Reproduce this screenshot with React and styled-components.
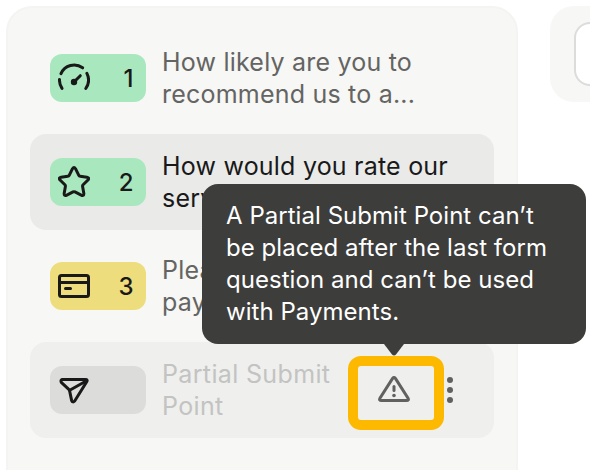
import React from "react";
import styled, { createGlobalStyle } from "styled-components";

const GlobalStyle = createGlobalStyle`
  * { box-sizing: border-box; }
  body {
    margin: 0;
    background: #fff;
    font-family: Inter, "Liberation Sans", sans-serif;
  }
`;

const Page = styled.div`
  position: relative;
  display: flex;
  align-items: flex-start;
  gap: 32px;
  width: 590px;
  height: 470px;
  padding: 6px 0 0 6px;
  overflow: hidden;
`;

const Panel = styled.aside`
  flex: none;
  display: flex;
  flex-direction: column;
  gap: 8px;
  width: 512px;
  height: 500px;
  padding: 22px;
  border: 2px solid #f4f4f3;
  border-radius: 26px;
  background: #f7f7f5;
`;

const Toolbar = styled.div`
  flex: none;
  width: 200px;
  height: 96px;
  padding: 16px 24px;
  border-radius: 24px;
  background: #f7f7f5;
`;

const ToolbarButton = styled.div`
  width: 152px;
  height: 64px;
  border: 2px solid #dcdcda;
  border-radius: 16px;
  background: #fff;
`;

const Row = styled.div`
  display: flex;
  align-items: center;
  gap: 16px;
  height: 96px;
  padding: 0 20px;
  border-radius: 16px;
  background: ${(p) => p.$bg || "transparent"};
`;

const Badge = styled.div`
  flex: none;
  display: flex;
  align-items: center;
  justify-content: space-between;
  width: 96px;
  height: 48px;
  padding: 0 12.5px 0 8px;
  border-radius: 12px;
  background: ${(p) => p.$bg};
  color: #191919;
  font-size: 24px;
  font-weight: 450;

  svg { display: block; flex: none; }
`;

const Label = styled.div`
  color: ${(p) => p.$color || "#646462"};
  font-size: 25px;
  line-height: 32px;
  letter-spacing: ${(p) => p.$spacing || "0.21px"};
  white-space: pre;
`;

const Tooltip = styled.div`
  position: absolute;
  left: 202px;
  top: 184px;
  width: 384px;
  height: 160px;
  padding: 16px 24px;
  border-radius: 16px;
  background: #3d3d3b;
  color: #fff;
  font-size: 24px;
  line-height: 32px;
  letter-spacing: 0.04px;
  white-space: pre;
`;

const Arrow = styled.svg`
  position: absolute;
  left: 182px;
  top: 159px;
`;

const Highlight = styled.div`
  position: absolute;
  left: 348px;
  top: 356px;
  display: flex;
  align-items: center;
  justify-content: center;
  width: 96px;
  height: 74px;
  padding: 0 4px 6px 0;
  border: 10px solid #fdb900;
  border-radius: 13px;
`;

const MenuDots = styled.svg`
  flex: none;
  margin: 0 20px 0 auto;
`;

const Glyph = ({ children }) => (
  <svg width="32" height="32" viewBox="0 0 32 32" fill="none" stroke="#191919"
    strokeWidth="3" strokeLinecap="round" strokeLinejoin="round">
    {children}
  </svg>
);

const GaugeIcon = () => (
  <Glyph>
    <path d="M3 11.6A14.3 14.3 0 0 1 24.6 5.8M28.9 11.4A15 15 0 0 1 27.8 26.5M1.5 17.4A15 15 0 0 0 4 26.4" />
    <path d="M16 20L22.3 13.7" />
    <circle cx="16" cy="20" r="3.2" fill="#191919" stroke="none" />
  </Glyph>
);

const StarIcon = () => (
  <Glyph>
    <path d="M14.5 2.7Q16 .3 17.5 2.7L20.8 9.4Q21.2 10.2 22.2 10.3L28.9 11.2Q32 11.8 29.7 14.2L25.1 18.8Q24.4 19.5 24.6 20.4L25.8 27.2Q26.1 30.4 23.2 29.1L17 25.9Q16 25.4 15 25.9L8.8 29.1Q5.9 30.4 6.2 27.2L7.4 20.4Q7.6 19.5 6.9 18.8L2.3 14.2Q0 11.8 3.1 11.2L9.8 10.3Q10.8 10.2 11.2 9.4Z" />
  </Glyph>
);

const CardIcon = () => (
  <Glyph>
    <rect x="1.5" y="5.5" width="29" height="21" rx="2" />
    <path d="M1.5 12.5H30.5" />
    <path d="M7.5 18.5H12.5" />
  </Glyph>
);

const SendIcon = () => (
  <Glyph>
    <path d="M4.2 5.5H27.5Q30.1 5.5 28.7 7.8L16.7 27Q14.6 29.1 13.6 26.4L11.6 16.7Q11.4 15.8 10.8 15.3L3.3 8.4Q2.3 6 4.2 5.5Z" />
    <path d="M11.7 16.2L28.6 6.7" />
  </Glyph>
);

const WarningIcon = () => (
  <svg width="32" height="28" viewBox="0 0 32 28" fill="none" stroke="#616160"
    strokeWidth="3" strokeLinecap="round" strokeLinejoin="round">
    <path d="M14.6 2.4Q16 .6 17.4 2.4L30.1 22.3Q31.2 24.5 28.6 24.5H3.4Q.8 24.5 1.9 22.3Z" />
    <path d="M16 10.5V14.5" />
    <circle cx="16" cy="19.5" r="1.8" fill="#616160" stroke="none" />
  </svg>
);

export default function App() {
  return (
    <>
      <GlobalStyle />
      <Page>
        <Panel>
          <Row>
            <Badge $bg="#a9e8be"><GaugeIcon />1</Badge>
            <Label>{"How likely are you to\nrecommend us to a..."}</Label>
          </Row>
          <Row $bg="#eaeae9">
            <Badge $bg="#a9e8be"><StarIcon />2</Badge>
            <Label $color="#191919">{"How would you rate our\nserv"}</Label>
          </Row>
          <Row>
            <Badge $bg="#eddd7d"><CardIcon />3</Badge>
            <Label>{"Plea\npay"}</Label>
          </Row>
          <Row $bg="#efefee">
            <Badge $bg="#dcdcdb"><SendIcon /></Badge>
            <Label $color="#c3c3c2" $spacing="0.35px">{"Partial Submit\nPoint"}</Label>
            <MenuDots width="8" height="28" viewBox="0 0 8 28" fill="#616160">
              <circle cx="4" cy="4" r="3" />
              <circle cx="4" cy="14" r="3" />
              <circle cx="4" cy="24" r="3" />
            </MenuDots>
          </Row>
        </Panel>
        <Toolbar>
          <ToolbarButton />
        </Toolbar>
        <Tooltip>
          {"A Partial Submit Point can’t\nbe placed after the last form\nquestion and can’t be used\nwith Payments."}
          <Arrow width="20" height="13" viewBox="0 0 20 13" fill="#3d3d3b">
            <path d="M0 0H20V1L12 11.5Q10 13.5 8 11.5L0 1Z" />
          </Arrow>
        </Tooltip>
        <Highlight><WarningIcon /></Highlight>
      </Page>
    </>
  );
}
